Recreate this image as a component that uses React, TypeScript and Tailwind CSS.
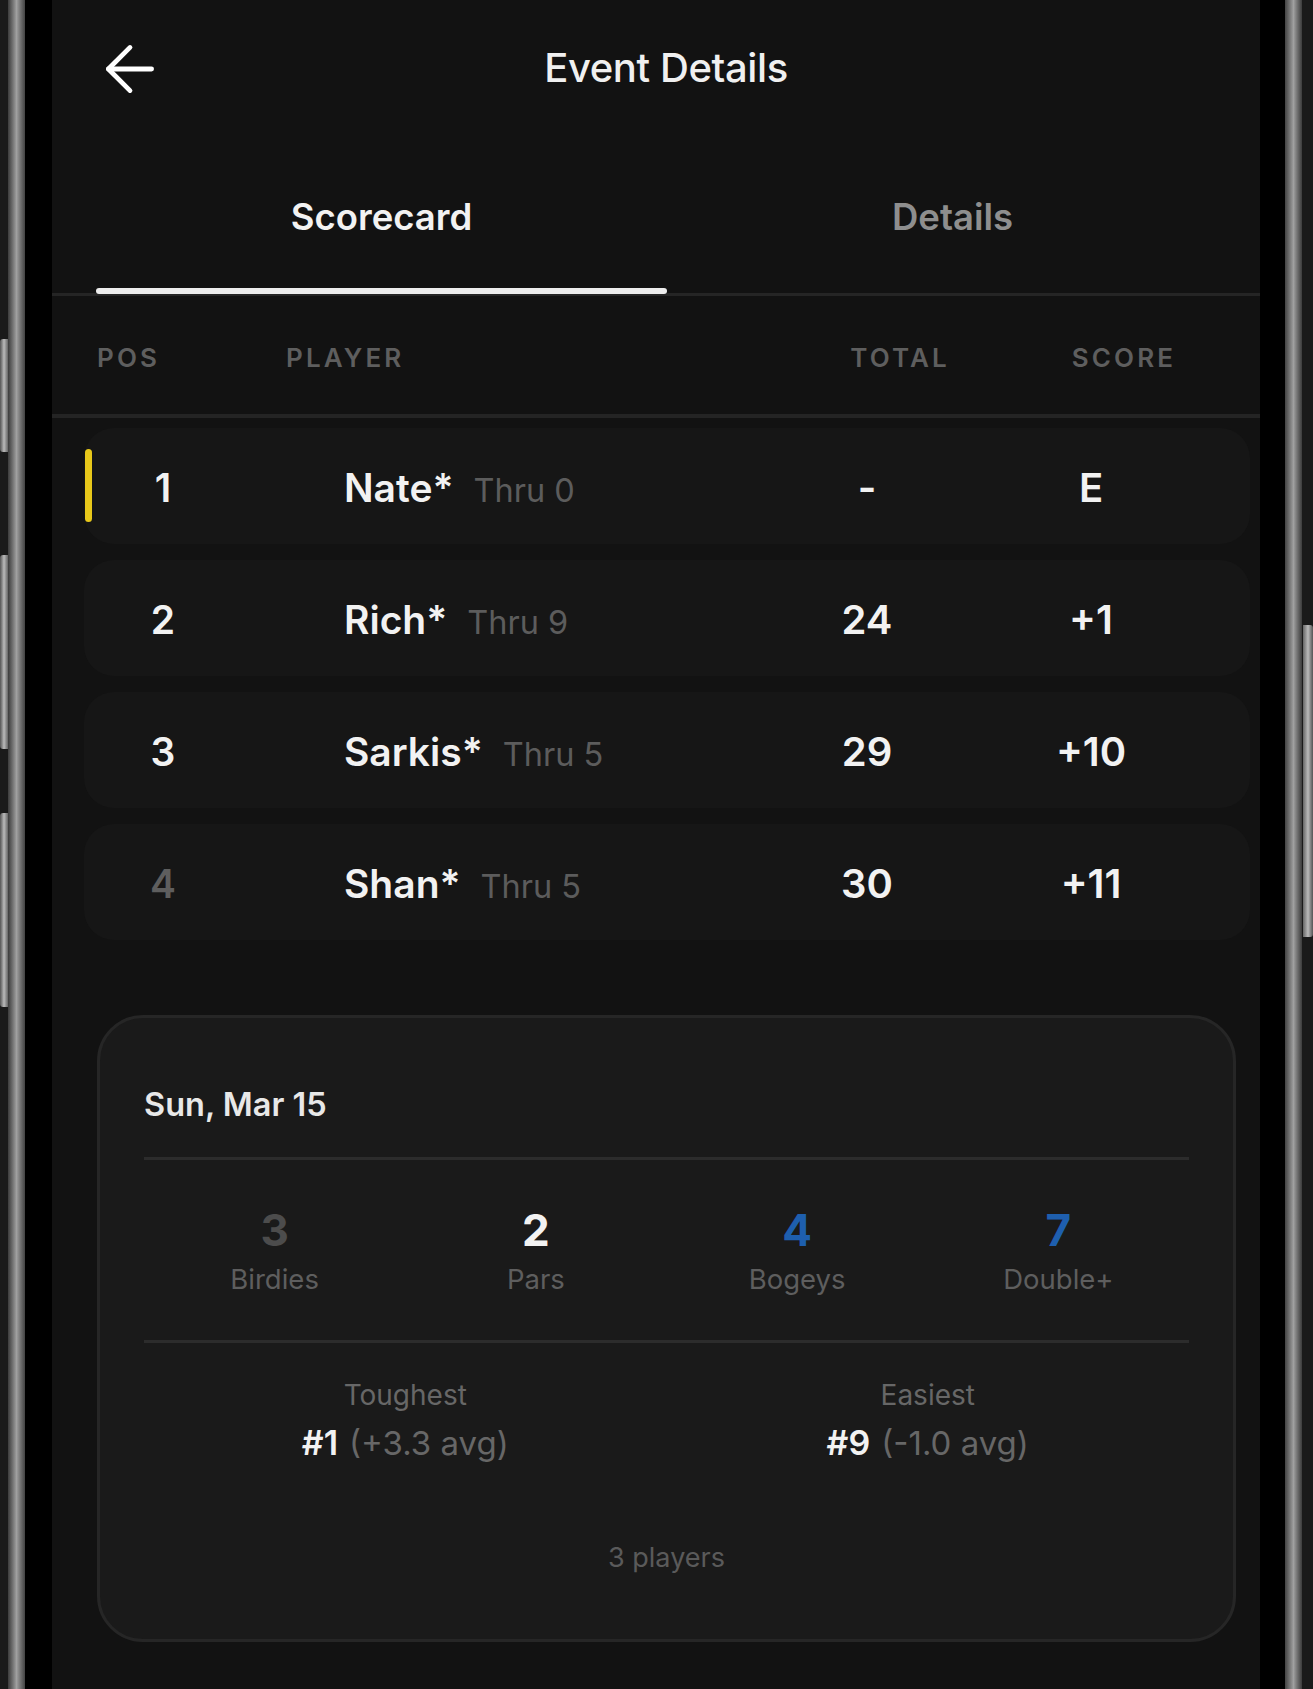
import React from "react";
import { ArrowLeft } from "lucide-react";

const rows = [
  { pos: "1", name: "Nate*", thru: "Thru 0", total: "-", score: "E", active: true, dimPos: false },
  { pos: "2", name: "Rich*", thru: "Thru 9", total: "24", score: "+1", active: false, dimPos: false },
  { pos: "3", name: "Sarkis*", thru: "Thru 5", total: "29", score: "+10", active: false, dimPos: false },
  { pos: "4", name: "Shan*", thru: "Thru 5", total: "30", score: "+11", active: false, dimPos: true },
];

export default function App() {
  return (
    <div className="w-[1313px] h-[1689px] bg-[#181818] flex overflow-hidden font-['Inter','Noto_Sans',sans-serif]">
      {/* left bezel */}
      <div className="relative w-[52px] h-full flex shrink-0">
        <div className="w-[8px] bg-[#1a1a1a]" />
        <div className="w-[17px] bg-gradient-to-r from-[#3c3c3c] via-[#a0a0a0] to-[#444444]" />
        <div className="flex-1 bg-black" />
        <div className="absolute left-0 top-[339px] w-[8px] h-[113px] rounded-l-[3px] bg-gradient-to-r from-[#555] via-[#bbb] to-[#666]" />
        <div className="absolute left-0 top-[555px] w-[8px] h-[194px] rounded-l-[3px] bg-gradient-to-r from-[#555] via-[#bbb] to-[#666]" />
        <div className="absolute left-0 top-[813px] w-[8px] h-[194px] rounded-l-[3px] bg-gradient-to-r from-[#555] via-[#bbb] to-[#666]" />
      </div>

      {/* screen */}
      <div className="w-[1208px] shrink-0 h-full bg-[#121212] flex flex-col">
        {/* top bar */}
        <div className="relative h-[136px] flex items-center justify-center">
          <ArrowLeft className="absolute left-[41px] top-[32px] text-white" size={74} strokeWidth={1.55} />
          <span className="ml-[20px] text-[40px] font-medium text-[#f0f0f0] tracking-[-0.01em]">Event Details</span>
        </div>

        {/* tabs */}
        <div className="border-b-[3px] border-[#252525] flex pl-[44px] pr-[22px]">
          <div className="relative flex-1 h-[157px] pt-[5px] flex items-center justify-center">
            <span className="text-[36.5px] font-semibold text-[#f2f2f2]">Scorecard</span>
            <div className="absolute left-0 right-0 bottom-[-1px] h-[6px] rounded-full bg-[#ededed]" />
          </div>
          <div className="flex-1 h-[157px] pt-[5px] flex items-center justify-center">
            <span className="text-[36.5px] font-semibold text-[#8e8e8e]">Details</span>
          </div>
        </div>

        {/* table header */}
        <div className="h-[122px] pt-[4px] border-b-[4px] border-[#242424] flex items-center text-[26px] font-semibold tracking-[0.12em] text-[#5e5e5e]">
          <span className="ml-[45px] w-[189px]">POS</span>
          <span className="flex-1">PLAYER</span>
          <span className="w-[200px] mr-[12px] text-center">TOTAL</span>
          <span className="w-[224px] mr-[24px] text-center">SCORE</span>
        </div>

        {/* rows */}
        <div className="flex flex-col gap-[16px] pt-[10px] pl-[32px] pr-[10px]">
          {rows.map((r) => (
            <div key={r.pos} className="relative h-[116px] pt-[4px] rounded-[30px] bg-[#161616] flex items-center">
              {r.active && (
                <div className="absolute left-[1px] top-[21px] w-[7px] h-[73px] rounded-full bg-[#e8c81a]" />
              )}
              <span className={`w-[158px] text-center text-[39px] font-semibold ${r.dimPos ? "text-[#5e5e5e]" : "text-[#f2f2f2]"}`}>
                {r.pos}
              </span>
              <div className="ml-[102px] flex-1 flex items-baseline gap-[20px]">
                <span className="text-[39px] font-semibold text-[#f2f2f2]">{r.name}</span>
                <span className="text-[32.5px] text-[#5c5c5c]">{r.thru}</span>
              </div>
              <span className="w-[200px] mr-[12px] text-center text-[40px] font-semibold text-[#f2f2f2]">{r.total}</span>
              <span className="w-[224px] mr-[47px] text-center text-[40px] font-semibold text-[#f2f2f2]">{r.score}</span>
            </div>
          ))}
        </div>

        {/* summary card */}
        <div className="ml-[45px] mr-[24px] mt-[75px] h-[627px] rounded-[46px] border-[3px] border-[#262626] bg-[#1a1a1a] px-[44px] flex flex-col">
          <div className="pt-[69px] h-[139px]">
            <span className="text-[32.5px] font-semibold text-[#e8e8e8] leading-[36px]">Sun, Mar 15</span>
          </div>
          <div className="h-[3px] bg-[#2c2c2c]" />
          <div className="grid grid-cols-4 h-[180px] pt-[45px]">
            {[
              { n: "3", l: "Birdies", c: "text-[#4c4c4c]" },
              { n: "2", l: "Pars", c: "text-[#f2f2f2]" },
              { n: "4", l: "Bogeys", c: "text-[#1e5fae]" },
              { n: "7", l: "Double+", c: "text-[#1e5fae]" },
            ].map((s) => (
              <div key={s.l} className="flex flex-col items-center">
                <span className={`text-[44px] font-bold leading-[50px] ${s.c}`}>{s.n}</span>
                <span className="mt-[6px] text-[27.5px] leading-[36px] text-[#5e5e5e]">{s.l}</span>
              </div>
            ))}
          </div>
          <div className="h-[3px] bg-[#2c2c2c]" />
          <div className="grid grid-cols-2 pt-[34px]">
            {[
              { l: "Toughest", h: "#1", a: "(+3.3 avg)" },
              { l: "Easiest", h: "#9", a: "(-1.0 avg)" },
            ].map((t) => (
              <div key={t.l} className="flex flex-col items-center">
                <span className="text-[28px] leading-[36px] text-[#676767]">{t.l}</span>
                <span className="mt-[10px] leading-[40px] flex items-baseline">
                  <span className="text-[34px] font-semibold text-[#f2f2f2]">{t.h}</span>
                  <span className="ml-[11px] text-[33px] text-[#676767]">{t.a}</span>
                </span>
              </div>
            ))}
          </div>
          <div className="mt-[78px] text-center text-[27px] leading-[34px] text-[#5a5a5a]">3 players</div>
        </div>
      </div>

      {/* right bezel */}
      <div className="relative w-[53px] h-full flex shrink-0">
        <div className="w-[25px] bg-black" />
        <div className="w-[17px] bg-gradient-to-r from-[#444] via-[#a0a0a0] to-[#3c3c3c]" />
        <div className="flex-1 bg-[#1a1a1a]" />
        <div className="absolute right-0 top-[625px] w-[10px] h-[312px] rounded-r-[3px] bg-gradient-to-r from-[#666] via-[#bbb] to-[#555]" />
      </div>
    </div>
  );
}
